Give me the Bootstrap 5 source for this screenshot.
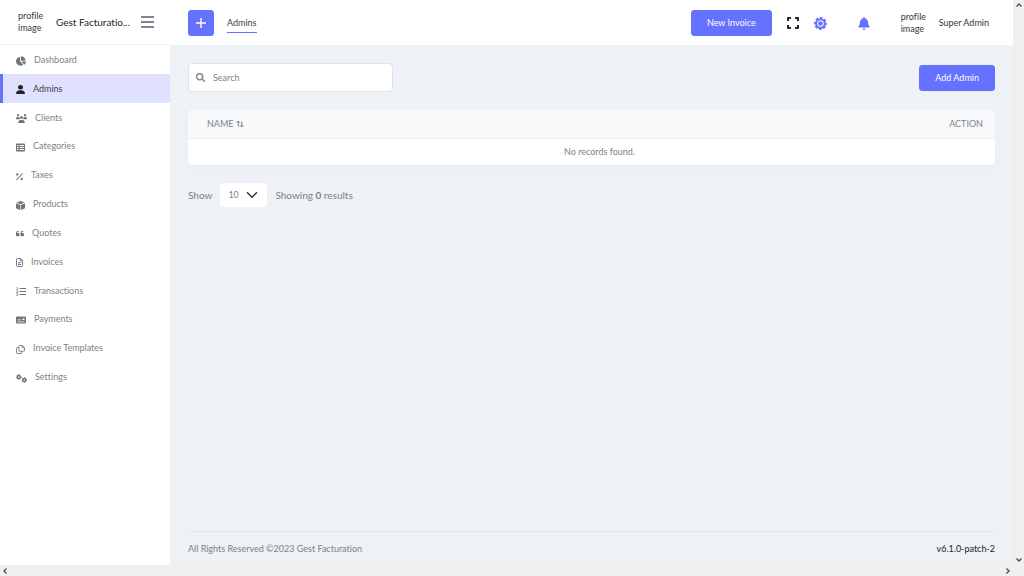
<!DOCTYPE html>
<html lang="en">
<head>
<meta charset="utf-8">
<meta name="viewport" content="width=device-width, initial-scale=1">
<title>Admins</title>
<link href="https://cdn.jsdelivr.net/npm/bootstrap@5.3.0/dist/css/bootstrap.min.css" rel="stylesheet">
<style>
:root { --brand: #6571ff; --muted: #7a828a; --page: #eef1f6; --line: #e3e7ec; }
body { font-family: Lato, "Open Sans", sans-serif; font-variant-ligatures: none; font-size: 9px; line-height: 12px; color: var(--muted); background: var(--page); }
svg { display: block; flex: none; fill: currentColor; }
a { color: inherit; text-decoration: none; }
.side { width: 170px; }
.side-head { height: 45px; border-bottom: 1px solid #eceef2; padding: 0 16px 0 18px; }
.avatar { width: 30px; color: #343a40; }
.company { font-size: 10px; color: #212529; width: 82px; margin-left: 8px; }
.toggle { color: #7e8790; }
.menu { height: 346px; display: grid; grid-auto-rows: 1fr; }
.menu a { height: 100%; gap: 8px; padding: 1px 0 0 16px; }
.menu svg { margin-top: 2px; color: #6c757d; }
.menu a.active { background: #dfe1ff; color: #3c4248; box-shadow: inset 3px 0 var(--brand); }
.menu a.active svg { color: #212529; }
.topbar { height: 45px; padding: 1px 24px 0 18px; }
.btn-brand { --bs-btn-color: #fff; --bs-btn-bg: var(--brand); --bs-btn-border-color: var(--brand); --bs-btn-hover-color: #fff; --bs-btn-hover-bg: #5661e6; --bs-btn-font-size: 9px; --bs-btn-line-height: 12px; --bs-btn-padding-y: 6px; --bs-btn-padding-x: 15px; --bs-btn-border-radius: 3px; height: 26px; }
.btn-plus { width: 26px; --bs-btn-padding-x: 0px; }
.tab-link { color: #3c4248; border-bottom: 1px solid var(--brand); padding: 4px 0 3px; margin-left: 13px; }
.icon-btn { background: none; border: 0; padding: 0; }
.tools { gap: 15px; }
.tools .alerts { margin: 0 16px; }
.brand-text { color: var(--brand); }
.user { color: #343a40; gap: 8px; }
.content { padding: 18px 18px 21px; }
.search { width: 205px; height: 29px; border: 1px solid #dee2e6; border-radius: 4px; padding: 0 7px; gap: 8px; }
.search svg { stroke: currentColor; stroke-width: 24; }
.search input { border: 0; outline: 0; min-width: 0; padding: 0; color: #495057; }
.search input::placeholder { color: #7a828a; opacity: 1; }
.records { margin: 18px 0; border-radius: 4px; overflow: hidden; box-shadow: 0 4px 10px rgba(60, 80, 110, .02); }
.records .table { --bs-table-color: #7a828a; --bs-table-bg: #fff; }
.records th { font-weight: 400; background: #f8f9fb; padding: 8px 12px 8px 19px; border-bottom: 1px solid #e9edf1; }
.records td { padding: 7px 3px 7px 19px; border: 0; }
.sort { gap: 2px; }
.pager { font-size: 10px; gap: 8px; }
.pager .form-select { width: 47px; height: 24px; border: 0; border-radius: 3px; font-size: 9px; line-height: 12px; padding: 0 20px 0 8px; color: var(--muted); background-size: 12px 12px; background-position: right 9px center; }
.foot { border-top: 1px solid var(--line); padding: 11px 0 10px; }
.bar-v { width: 11px; background: #efefef; color: #505050; padding: 3px 0; }
.bar-h { height: 11px; background: #efefef; color: #505050; padding: 0 14px 0 3px; }
</style>
</head>
<body>
<div class="d-flex flex-column min-vh-100">
  <div class="d-flex flex-grow-1">
    <aside class="side bg-white flex-shrink-0">
      <div class="side-head d-flex align-items-center">
        <span class="avatar">profile image</span>
        <a href="#" class="company text-nowrap">Gest Facturatio...</a>
        <button class="icon-btn toggle ms-auto" type="button" aria-label="Toggle menu"><svg width="13" height="12" viewBox="0 0 13 12"><path d="M0 0h13v2H0zM0 5h13v2H0zM0 10h13v2H0z"/></svg></button>
      </div>
      <nav>
        <ul class="menu list-unstyled mb-0">
          <li><a href="#" class="d-flex align-items-center"><svg width="10" height="10" viewBox="32 0 544 512"><path d="M304 240V16.600c0-9 7-16.600 16-16.600C443.700 0 544 100.300 544 224c0 9-7.600 16-16.600 16H304zM32 272C32 150.700 122.100 50.300 239 34.300c9.200-1.300 17 6.100 17 15.400V288L412.500 444.500c6.700 6.700 6.200 17.700-1.500 23.100C371.800 495.600 323.800 512 272 512C139.500 512 32 404.600 32 272zm526.400 16c9.300 0 16.600 7.800 15.400 17c-7.700 55.900-34.600 105.600-73.900 142.300c-6 5.600-15.400 5.200-21.200-.7L320 288H558.400z"/></svg>Dashboard</a></li>
          <li><a href="#" class="d-flex align-items-center active" aria-current="page"><svg width="9" height="9" viewBox="0 0 448 512" preserveAspectRatio="none"><path d="M224 256A128 128 0 1 0 224 0a128 128 0 1 0 0 256zm-45.700 48C79.800 304 0 383.800 0 482.300C0 498.700 13.300 512 29.700 512H418.300c16.400 0 29.700-13.300 29.700-29.700C448 383.800 368.200 304 269.700 304H178.300z"/></svg>Admins</a></li>
          <li><a href="#" class="d-flex align-items-center"><svg width="11" height="9" viewBox="0 0 22 18"><circle cx="4" cy="2.500" r="2.300"/><circle cx="18" cy="2.500" r="2.300"/><circle cx="11" cy="7" r="3"/><path d="M0 9.500Q0 6 3 6h2.500q1.200 0 1.500 1-.3 2 1 3.500H0zM22 9.500Q22 6 19 6h-2.500q-1.200 0-1.500 1 .3 2-1 3.500h8zM4.500 18q0-6 4.500-6h4q4.500 0 4.500 6z"/></svg>Clients</a></li>
          <li><a href="#" class="d-flex align-items-center"><svg width="9" height="9" viewBox="0 0 18 18"><path fill-rule="evenodd" d="M2 1h14q2 0 2 2v12q0 2-2 2H2q-2 0-2-2V3q0-2 2-2zm0 3v2h3V4zm5 0v2h9V4zM2 8v2h3V8zm5 0v2h9V8zm-5 4v2h3v-2zm5 0v2h9v-2z"/></svg>Categories</a></li>
          <li><a href="#" class="d-flex align-items-center"><svg width="7" height="9" viewBox="0 0 14 18"><path d="M1.500 15.500l11-12" stroke="currentColor" stroke-width="2.200" stroke-linecap="round"/><circle cx="2.500" cy="5" r="2.300"/><circle cx="11.500" cy="14" r="2.300"/></svg>Taxes</a></li>
          <li><a href="#" class="d-flex align-items-center"><svg width="9" height="9" viewBox="0 0 18 18"><path d="M9 0l8 3-8 3.500L1 3zM0 4.500l8.300 3.500v10L1 15q-1-.5-1-1.500zM18 4.500v9q0 1-1 1.500l-7.300 3V8z"/></svg>Products</a></li>
          <li><a href="#" class="d-flex align-items-center"><svg width="8" height="9" viewBox="0 0 448 512"><path d="M0 216C0 149.700 53.700 96 120 96h8c17.700 0 32 14.300 32 32s-14.300 32-32 32h-8c-30.900 0-56 25.100-56 56v8h64c35.300 0 64 28.700 64 64v64c0 35.300-28.700 64-64 64H64c-35.300 0-64-28.700-64-64V216zm256 0c0-66.300 53.700-120 120-120h8c17.700 0 32 14.300 32 32s-14.300 32-32 32h-8c-30.900 0-56 25.100-56 56v8h64c35.300 0 64 28.700 64 64v64c0 35.300-28.700 64-64 64h-64c-35.300 0-64-28.700-64-64V216z"/></svg>Quotes</a></li>
          <li><a href="#" class="d-flex align-items-center"><svg width="7" height="9" viewBox="0 0 14 18"><path fill="none" stroke="currentColor" stroke-width="1.900" d="M2.500 1H9l4 4v10.500q0 1.500-1.500 1.500h-9Q1 17 1 15.500v-13Q1 1 2.500 1zM8.500 1v4.500H13M4 9.500h6M4 13h6"/></svg>Invoices</a></li>
          <li><a href="#" class="d-flex align-items-center"><svg width="10" height="9" viewBox="0 0 20 18"><path d="M7 2h13v2H7zM7 8h13v2H7zM7 14h13v2H7z"/><path d="M1 1h1.500v5M.5 6h4M.8 8.500q3-1 2.700.5L1 11.500h3.500M.8 13.500h3L2.500 15q2 .2 1 1.800-1.500.8-3 0" fill="none" stroke="currentColor" stroke-width="1.300"/></svg>Transactions</a></li>
          <li><a href="#" class="d-flex align-items-center"><svg width="10" height="8" viewBox="0 0 20 16"><path fill-rule="evenodd" d="M2 1h16q2 0 2 2v10q0 2-2 2H2q-2 0-2-2V3q0-2 2-2zm11 4v3h4V5zM3 7v1.500h7V7zm0 4v1.500h14V11z"/></svg>Payments</a></li>
          <li><a href="#" class="d-flex align-items-center"><svg width="9" height="9" viewBox="0 0 18 18"><path fill="none" stroke="currentColor" stroke-width="1.700" d="M7.500 1H13l4 4v6q0 1.500-1.500 1.500h-8Q6 12.500 6 11V2.500Q6 1 7.500 1zM12.500 1v4.500H17M6 5H2.500Q1 5 1 6.500v9Q1 17 2.500 17h7.500q1.500 0 1.500-1.500v-3"/></svg>Invoice Templates</a></li>
          <li><a href="#" class="d-flex align-items-center"><svg width="11" height="9" viewBox="0 0 22 18"><g fill="none" stroke="currentColor"><circle cx="5.500" cy="6" r="3" stroke-width="2.800"/><circle cx="5.500" cy="6" r="4.800" stroke-width="1.800" stroke-dasharray="2.600 2.420"/><circle cx="16.500" cy="12" r="3" stroke-width="2.800"/><circle cx="16.500" cy="12" r="4.800" stroke-width="1.800" stroke-dasharray="2.600 2.420"/></g></svg>Settings</a></li>
        </ul>
      </nav>
    </aside>
    <div class="d-flex flex-column flex-grow-1">
      <header class="topbar bg-white d-flex align-items-center justify-content-between">
        <div class="d-flex align-items-center">
          <button type="button" class="btn btn-brand btn-plus d-flex align-items-center justify-content-center" aria-label="Create"><svg width="10" height="10" viewBox="0 0 10 10"><path d="M4.300 0h1.400v4.300H10v1.400H5.700V10H4.300V5.700H0V4.300h4.300z"/></svg></button>
          <a href="#" class="tab-link">Admins</a>
        </div>
        <div class="tools d-flex align-items-center">
          <button type="button" class="btn btn-brand">New Invoice</button>
          <button type="button" class="icon-btn text-dark" aria-label="Full screen"><svg width="12" height="12" viewBox="0 0 12 12"><path d="M1 4V1h3M8 1h3v3M11 8v3H8M4 11H1V8" fill="none" stroke="currentColor" stroke-width="2" stroke-linejoin="round"/></svg></button>
          <button type="button" class="icon-btn brand-text" aria-label="Theme"><svg width="13" height="13" viewBox="0 0 26 26"><g fill="none" stroke="currentColor"><circle cx="13" cy="13" r="8.500" stroke-width="4"/><circle cx="13" cy="13" r="11" stroke-width="3.800" stroke-dasharray="5.400 3.240" stroke-dashoffset="2.700"/></g><circle cx="13" cy="13" r="4.600"/></svg></button>
          <button type="button" class="icon-btn brand-text alerts" aria-label="Notifications"><svg width="12" height="13" viewBox="0 0 448 512"><path d="M224 0c-17.700 0-32 14.300-32 32V51.200C119 66 64 130.600 64 208v18.800c0 47-17.300 92.400-48.500 127.600l-7.400 8.300c-8.400 9.400-10.400 22.900-5.300 34.400S19.400 416 32 416H416c12.600 0 24-7.400 29.200-18.900s3.100-25-5.300-34.400l-7.400-8.300C401.300 319.200 384 273.900 384 226.800V208c0-77.400-55-142-128-156.800V32c0-17.700-14.300-32-32-32zm45.300 493.300c12-12 18.700-28.300 18.700-45.300H160c0 17 6.700 33.300 18.700 45.300s28.300 18.700 45.300 18.700s33.300-6.700 45.300-18.700z"/></svg></button>
          <a href="#" class="user d-flex align-items-center"><span class="avatar">profile image</span><span>Super Admin</span></a>
        </div>
      </header>
      <main class="content d-flex flex-column flex-grow-1 pb-0">
        <div class="d-flex justify-content-between align-items-start">
          <label class="search d-flex align-items-center bg-white">
            <svg width="9" height="9" viewBox="0 0 512 512"><path d="M416 208c0 45.900-14.900 88.300-40 122.700L502.600 457.400c12.500 12.500 12.500 32.800 0 45.300s-32.800 12.500-45.300 0L330.700 376c-34.400 25.200-76.800 40-122.700 40C93.100 416 0 322.900 0 208S93.100 0 208 0S416 93.100 416 208zM208 352a144 144 0 1 0 0-288 144 144 0 1 0 0 288z"/></svg>
            <input type="search" class="flex-grow-1" placeholder="Search" aria-label="Search">
          </label>
          <button type="button" class="btn btn-brand align-self-center">Add Admin</button>
        </div>
        <div class="records">
          <table class="table mb-0">
            <thead><tr>
              <th scope="col"><span class="sort d-flex align-items-center">NAME <svg width="8" height="8" viewBox="0 0 16 16"><path fill="none" stroke="currentColor" stroke-width="2" d="M4.500 13V2M1 5.500L4.500 2 8 5.500M11.500 3v11M8 10.500l3.500 3.500 3.500-3.500"/></svg></span></th>
              <th scope="col" class="text-end">ACTION</th>
            </tr></thead>
            <tbody><tr><td colspan="2" class="text-center">No records found.</td></tr></tbody>
          </table>
        </div>
        <div class="pager d-flex align-items-center">
          <label for="size">Show</label>
          <select id="size" class="form-select"><option>10</option><option>25</option><option>50</option></select>
          <span>Showing <b>0</b> results</span>
        </div>
      </main>
      <footer class="content py-0">
        <div class="foot d-flex justify-content-between">
          <span>All Rights Reserved ©2023 Gest Facturation</span>
          <span class="text-dark">v6.1.0-patch-2</span>
        </div>
      </footer>
    </div>
    <div class="bar-v d-flex flex-column justify-content-between align-items-center" aria-hidden="true">
      <svg width="6" height="4" viewBox="0 0 6 4"><path d="M.5 3.500L3 1l2.500 2.500" fill="none" stroke="currentColor" stroke-width="1.400"/></svg>
      <svg width="6" height="4" viewBox="0 0 6 4"><path d="M.5 .5L3 3 5.500.5" fill="none" stroke="currentColor" stroke-width="1.400"/></svg>
    </div>
  </div>
  <div class="bar-h d-flex justify-content-between align-items-center" aria-hidden="true">
    <svg width="4" height="6" viewBox="0 0 4 6"><path d="M3.500 .5L1 3l2.500 2.500" fill="none" stroke="currentColor" stroke-width="1.400"/></svg>
    <svg width="4" height="6" viewBox="0 0 4 6"><path d="M.5 .5L3 3 .5 5.500" fill="none" stroke="currentColor" stroke-width="1.400"/></svg>
  </div>
</div>
<script src="https://cdn.jsdelivr.net/npm/bootstrap@5.3.0/dist/js/bootstrap.bundle.min.js"></script>
</body>
</html>
